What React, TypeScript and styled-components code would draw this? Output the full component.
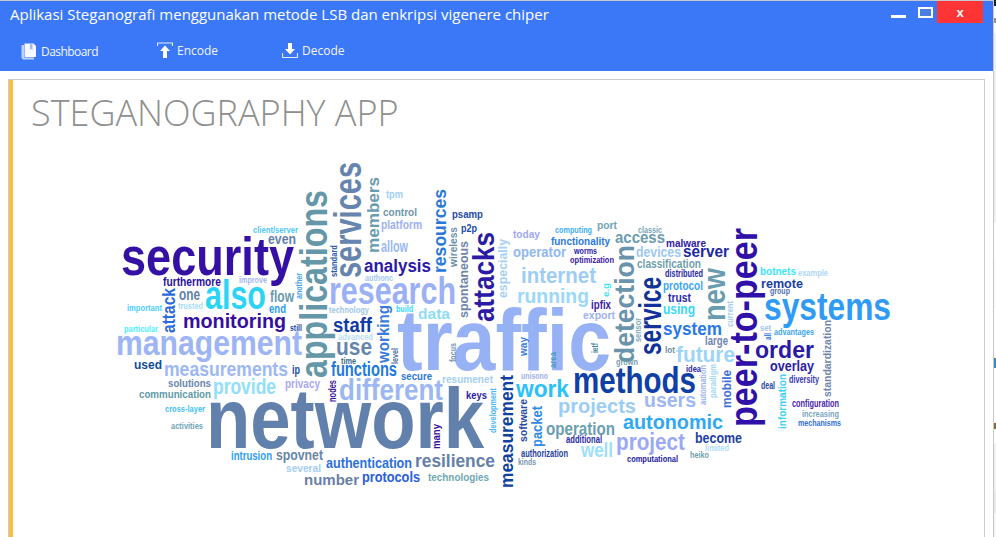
import React from 'react';
import styled, { createGlobalStyle } from 'styled-components';

const GlobalStyle = createGlobalStyle`
  html, body {
    margin: 0;
    padding: 0;
    background: #fff;
    overflow: hidden;
  }
`;

const Desktop = styled.div`
  display: flex;
  width: 996px;
  height: 537px;
  overflow: hidden;
  font-family: "Open Sans", "Noto Sans", sans-serif;
`;

const Window = styled.div`
  width: 993px;
  height: 537px;
  box-sizing: content-box;
  border-right: 1px solid #c8c8c8;
  overflow: hidden;
  background: #fff;
`;

const BehindStrip = styled.div`
  width: 2px;
  display: flex;
  flex-direction: column;
`;

const StripPiece = styled.div<{ $h: number; $c: string }>`
  height: ${({ $h }) => $h}px;
  background: ${({ $c }) => $c};
  flex-shrink: 0;
`;

const Header = styled.header`
  height: 70px;
  border-top: 1px solid #c4c8d0;
  background: #3b78f8;
  color: #fff;
`;

const TitleRow = styled.div`
  display: flex;
  justify-content: space-between;
  height: 23px;
`;

const AppTitle = styled.div`
  padding: 3px 0 0 10px;
  font-size: 15px;
  line-height: 20px;
  white-space: nowrap;
`;

const WindowControls = styled.div`
  display: flex;
  align-items: flex-start;
  padding-right: 10px;
`;

const MinimizeButton = styled.div`
  width: 15px;
  height: 3px;
  margin: 14px 12px 0 0;
  background: #fff;
`;

const MaximizeButton = styled.div`
  width: 11px;
  height: 7px;
  margin: 6px 4px 0 0;
  border: 2px solid #fff;
  background: #4a7fe0;
`;

const CloseButton = styled.div`
  width: 46px;
  height: 22px;
  background: #ff3535;
  font: bold 13px/23px "Liberation Sans", sans-serif;
  text-align: center;
`;

const Toolbar = styled.nav`
  display: flex;
  padding: 16px 0 0 21px;
`;

const ToolButton = styled.div<{ $w: number; $drop?: number; $tight?: boolean }>`
  display: flex;
  align-items: center;
  gap: 4px;
  width: ${({ $w }) => $w}px;
  height: 20px;
  margin-top: ${({ $drop }) => $drop ?? 0}px;
  font-size: 12px;
  letter-spacing: ${({ $tight }) => ($tight ? '-0.55px' : '0')};
  color: #f2f6ff;
`;

const Panel = styled.main`
  height: 480px;
  margin: 8px 8px 0 8px;
  border: 1px solid #cbcbcb;
  box-sizing: border-box;
`;

const PanelInner = styled.div`
  height: 100%;
  border-left: 4px solid #fbbd3f;
  padding: 12px 0 0 18px;
`;

const Heading = styled.h1`
  margin: 0;
  font-size: 36px;
  line-height: 42px;
  font-weight: 300;
  color: #8f8f8f;
  white-space: nowrap;
`;

const CloudCanvas = styled.svg`
  display: block;
  margin: 16px 0 0 68px;
`;

const CloudWord = styled.text`
  font-family: "Liberation Sans", Arial, sans-serif;
  font-weight: 700;
`;

const DashboardIcon = () => (
  <svg width="16" height="17" viewBox="0 0 16 17">
    <path d="M0.5 2h2.5v12.5h10V16.5H2L0.5 15z" fill="#bfd2fa" />
    <path d="M3.5 0.5h9L15 3v11H3.5z" fill="#f6f8ff" />
    <path d="M9 0.5h2.5v6.5L10.2 5.8 9 7z" fill="#9db9f6" />
  </svg>
);

const EncodeIcon = () => (
  <svg width="16" height="17" viewBox="0 0 16 17">
    <path d="M0.5 4V1h15v3" fill="none" stroke="#dfe9ff" strokeWidth="1.2" />
    <path d="M8 3.5L13 9H10V16H6V9H3z" fill="#fff" />
  </svg>
);

const DecodeIcon = () => (
  <svg width="16" height="17" viewBox="0 0 16 17">
    <path d="M6 1h4v6h3l-5 5.5L3 7h3z" fill="#fff" />
    <path d="M0.5 11v4.5h15V11" fill="none" stroke="#dfe9ff" strokeWidth="1.2" />
  </svg>
);

// word, x, baseline y, painted length, font size, colour, reads bottom to top
type Word = [string, number, number, number, number, string, boolean?];

const words: Word[] = [
  ['security', 122, 275, 173, 54, '#3510a5'],
  ['traffic', 398, 370, 214, 88, '#97b1f5'],
  ['network', 207, 448, 278, 85, '#6280ac'],
  ['management', 117, 355, 186, 35, '#9db4f5'],
  ['research', 330, 304, 127, 38, '#9bb0f5'],
  ['methods', 574, 393, 123, 36, '#1040a5'],
  ['systems', 765, 320, 127, 38, '#2f9bf5'],
  ['different', 340, 400, 104, 29, '#9bb8f5'],
  ['also', 206, 309, 61, 40, '#2bd4f5'],
  ['monitoring', 184, 328, 103, 21, '#3510a0'],
  ['measurements', 165, 376, 124, 21, '#9db8f5'],
  ['provide', 214, 394, 63, 22, '#90e0fa'],
  ['functions', 332, 376, 66, 20, '#1e7ae0'],
  ['staff', 334, 332, 39, 20, '#0f3ba5'],
  ['use', 337, 355, 36, 24, '#6585ad'],
  ['furthermore', 164, 286, 58, 12, '#2a10a0'],
  ['client/server', 254, 233, 45, 9, '#4dc8fa'],
  ['even', 269, 244, 28, 14, '#6580a8'],
  ['improve', 240, 283, 28, 9, '#a5b8f0'],
  ['one', 180, 300, 21, 16, '#6580a8'],
  ['flow', 271, 302, 24, 16, '#6a9ab0'],
  ['end', 270, 313, 17, 13, '#2a9df4'],
  ['important', 128, 311, 35, 9, '#4dd0ff'],
  ['trusted', 179, 309, 25, 9, '#a5dcf7'],
  ['technology', 330, 313, 40, 9, '#a0c8e8'],
  ['still', 291, 331, 12, 9, '#1a4aa8'],
  ['particular', 125, 332, 34, 9, '#4df0ff'],
  ['advanced', 339, 340, 35, 9, '#bcdcf5'],
  ['used', 135, 369, 28, 13, '#104a9e'],
  ['time', 342, 364, 15, 9, '#3a6a8a'],
  ['ip', 293, 374, 8, 12, '#1a4aa8'],
  ['secure', 402, 380, 31, 11, '#2a78d8'],
  ['resumenet', 443, 383, 51, 10.5, '#a4d0f5'],
  ['solutions', 169, 387, 43, 11.5, '#6a85b0'],
  ['privacy', 286, 388, 35, 12, '#a8a8f5'],
  ['communication', 140, 398, 72, 11.5, '#5f9aa8'],
  ['cross-layer', 166, 412, 40, 9, '#3fc0f8'],
  ['activities', 172, 429, 32, 9, '#6fa5b5'],
  ['intrusion', 232, 460, 41, 13, '#2e9ff0'],
  ['spovnet', 277, 460, 47, 15, '#6a85a8'],
  ['several', 287, 472, 35, 11, '#a4cdf5'],
  ['authentication', 327, 468, 86, 14, '#2b70e0'],
  ['number', 305, 485, 55, 15, '#6a80a8'],
  ['protocols', 363, 482, 58, 15, '#2a5ce0'],
  ['technologies', 429, 481, 61, 11, '#6fa8b0'],
  ['resilience', 416, 467, 80, 18, '#6580a8'],
  ['keys', 467, 399, 21, 11, '#2a1ca0'],
  ['unisono', 522, 379, 27, 8.5, '#a0b0e5'],
  ['work', 517, 397, 53, 23, '#2cc0f8'],
  ['operation', 547, 435, 69, 19, '#6a9eb0'],
  ['projects', 559, 413, 78, 21, '#9bcdf5'],
  ['additional', 567, 443, 36, 9.5, '#2a2aa8'],
  ['authorization', 522, 457, 47, 9.5, '#1f3fa0'],
  ['kinds', 519, 465, 18, 9, '#7a95b0'],
  ['well', 582, 457, 32, 20, '#9ce0fa'],
  ['project', 617, 450, 69, 24, '#9aa8f5'],
  ['autonomic', 624, 429, 100, 21, '#2ea8f5'],
  ['users', 645, 407, 52, 20, '#9db8f5'],
  ['become', 696, 443, 47, 14, '#1a40a5'],
  ['limited', 706, 451, 24, 9, '#b0dcf8'],
  ['computational', 628, 462, 51, 8.5, '#2020a0'],
  ['heiko', 691, 458, 19, 8.5, '#6fa0ac'],
  ['order', 756, 358, 59, 24, '#2a1aa5'],
  ['overlay', 771, 371, 44, 15, '#2a20a8'],
  ['diversity', 790, 383, 30, 10, '#3a3ab0'],
  ['deal', 762, 389, 14, 9.5, '#1f4aa5'],
  ['configuration', 793, 407, 47, 9.5, '#4a25b0'],
  ['increasing', 803, 417, 37, 9, '#7aa5c0'],
  ['mechanisms', 799, 426, 43, 9, '#3070d8'],
  ['idea', 687, 372, 15, 9, '#2a2aa8'],
  ['future', 677, 362, 59, 22, '#9cd5f8'],
  ['large', 706, 345, 23, 12, '#6f85b0'],
  ['lot', 666, 353, 10, 9, '#6a90a5'],
  ['grown', 617, 365, 22, 9, '#7aa0b0'],
  ['system', 664, 335, 59, 19, '#2a78e8'],
  ['using', 664, 314, 32, 15, '#38d8fa'],
  ['trust', 669, 302, 23, 12, '#2a2aa8'],
  ['protocol', 664, 290, 40, 13, '#3aa5f5'],
  ['distributed', 666, 277, 38, 9.5, '#2a2aa8'],
  ['classification', 638, 268, 64, 12, '#6fa0ac'],
  ['devices', 637, 257, 45, 15, '#9dc8f5'],
  ['server', 684, 257, 46, 16, '#1a2aa0'],
  ['access', 616, 243, 50, 17, '#6a9cb0'],
  ['malware', 667, 247, 40, 10.5, '#3020a8'],
  ['classic', 639, 233, 24, 8.5, '#7aa5b5'],
  ['port', 598, 229, 20, 11.5, '#6fa5b5'],
  ['computing', 556, 233, 37, 9, '#3fb0f5'],
  ['functionality', 552, 245, 59, 11.5, '#2a78e0'],
  ['worms', 575, 254, 23, 8.5, '#2a1aa8'],
  ['optimization', 571, 263, 44, 8.5, '#3a15a5'],
  ['today', 514, 238, 27, 11, '#a0a8f0'],
  ['operator', 514, 257, 53, 14, '#90b8f0'],
  ['internet', 522, 283, 75, 22, '#9dcdf5'],
  ['running', 518, 303, 72, 20, '#9ad8fa'],
  ['ipfix', 592, 309, 20, 12, '#3a1aa5'],
  ['export', 584, 319, 32, 11, '#a0b0f0'],
  ['p2p', 462, 232, 16, 11.5, '#204aa8'],
  ['psamp', 453, 218, 31, 11, '#1f4aa8'],
  ['allow', 382, 252, 27, 16, '#9ab8f5'],
  ['analysis', 365, 272, 67, 18, '#2a1aa5'],
  ['authonc', 366, 281, 28, 8, '#a5c8f0'],
  ['build', 397, 312, 17, 9, '#30d8fa'],
  ['data', 419, 319, 32, 15, '#90dcf5'],
  ['control', 384, 216, 34, 11, '#6f95a8'],
  ['platform', 382, 229, 41, 12, '#a0b0f5'],
  ['tpm', 387, 198, 17, 10, '#a0d0f5'],
  ['botnets', 761, 275, 36, 11, '#3ae5fa'],
  ['example', 799, 276, 30, 9, '#b0d8f5'],
  ['remote', 762, 288, 42, 13.5, '#1a40a5'],
  ['group', 771, 294, 20, 9, '#5070b0'],
  ['set', 761, 331, 11, 8, '#a0c5f0'],
  ['advantages', 775, 335, 40, 9, '#3fa5f5'],
  ['applications', 328, 378, 188, 38, '#6497a8', true],
  ['services', 362, 278, 116, 38, '#6584ae', true],
  ['peer-to-peer', 758, 427, 199, 38, '#2f10a8', true],
  ['attacks', 495, 322, 90, 30, '#2a1aa5', true],
  ['service', 662, 355, 78, 32, '#10329a', true],
  ['detection', 635, 363, 118, 28, '#6a94ac', true],
  ['new', 726, 321, 53, 32, '#6a9cb0', true],
  ['resources', 447, 273, 84, 18, '#2a78d8', true],
  ['members', 380, 253, 76, 17, '#6a9cb0', true],
  ['measurement', 514, 488, 113, 18, '#1040a0', true],
  ['working', 390, 363, 58, 17, '#3a7bdc', true],
  ['attack', 176, 333, 45, 19, '#2a6ae0', true],
  ['standard', 338, 277, 32, 8.5, '#2a5ab0', true],
  ['another', 303, 299, 26, 8.5, '#4aa3e8', true],
  ['level', 399, 364, 16, 9, '#4a6aa0', true],
  ['nodes', 337, 402, 22, 10, '#3a10a0', true],
  ['many', 441, 449, 25, 11, '#3a10a0', true],
  ['development', 497, 433, 45, 9, '#45b8f5', true],
  ['software', 528, 442, 43, 11, '#2a4aa8', true],
  ['packet', 543, 447, 41, 15, '#2f8ae8', true],
  ['information', 787, 429, 55, 11, '#3ed0f8', true],
  ['standardization', 832, 397, 77, 11, '#6f85ac', true],
  ['mobile', 732, 408, 38, 13, '#3f70d8', true],
  ['paradigm', 717, 398, 34, 8, '#a5d8f5', true],
  ['automation', 707, 405, 40, 8, '#a0b4e8', true],
  ['ietf', 599, 353, 10, 8.5, '#3f7fa0', true],
  ['sensor', 642, 342, 24, 8, '#80a8b8', true],
  ['especially', 508, 298, 59, 13, '#a8d0f5', true],
  ['way', 528, 356, 19, 11, '#3f7fd8', true],
  ['area', 557, 368, 16, 8.5, '#4a9ac0', true],
  ['focus', 457, 362, 19, 8.5, '#7a95b0', true],
  ['spontaneous', 469, 318, 77, 13, '#6f85a8', true],
  ['wireless', 458, 267, 40, 10, '#6a90a8', true],
  ['current', 734, 327, 26, 8, '#a5ccf0', true],
  ['all', 772, 340, 7, 8, '#2a78d8', true],
  ['e.g', 610, 297, 14, 8, '#3ae5f5', true],
];

const strip: [number, string][] = [
  [6, '#222'], [12, '#fff'], [5, '#9a8f88'], [10, '#fff'], [190, '#efefef'],
  [35, '#fff'], [50, '#fafafa'], [50, '#fff'], [10, '#2a8fd0'], [55, '#fff'],
  [6, '#8a6a30'], [14, '#fff'], [50, '#f1f1f1'], [20, '#e9e9e9'], [24, '#f7f7f7'],
];

// the cloud's own face has a taller x-height, so the tiny words need a little more size
const drawnSize = (size: number) => (size <= 10 ? size + 0.8 : size);

const App: React.FC = () => {
  return (
    <Desktop>
      <GlobalStyle />
      <Window>
        <Header>
          <TitleRow>
            <AppTitle>Aplikasi Steganografi menggunakan metode LSB dan enkripsi vigenere chiper</AppTitle>
            <WindowControls>
              <MinimizeButton />
              <MaximizeButton />
              <CloseButton>x</CloseButton>
            </WindowControls>
          </TitleRow>
          <Toolbar>
            <ToolButton $w={136} $drop={1} $tight>
              <DashboardIcon />
              Dashboard
            </ToolButton>
            <ToolButton $w={125}>
              <EncodeIcon />
              Encode
            </ToolButton>
            <ToolButton $w={80}>
              <DecodeIcon />
              Decode
            </ToolButton>
          </Toolbar>
        </Header>
        <Panel>
          <PanelInner>
            <Heading>STEGANOGRAPHY APP</Heading>
            <CloudCanvas width="820" height="350" viewBox="100 150 820 350">
              {words.map(([word, x, y, length, size, color, vertical]) => (
                <CloudWord
                  key={word}
                  x={x}
                  y={y}
                  fontSize={drawnSize(size)}
                  fill={color}
                  textLength={length}
                  lengthAdjust="spacingAndGlyphs"
                  transform={vertical ? `rotate(-90 ${x} ${y})` : undefined}
                >
                  {word}
                </CloudWord>
              ))}
            </CloudCanvas>
          </PanelInner>
        </Panel>
      </Window>
      <BehindStrip>
        {strip.map(([h, c], i) => (
          <StripPiece key={i} $h={h} $c={c} />
        ))}
      </BehindStrip>
    </Desktop>
  );
};

export default App;
